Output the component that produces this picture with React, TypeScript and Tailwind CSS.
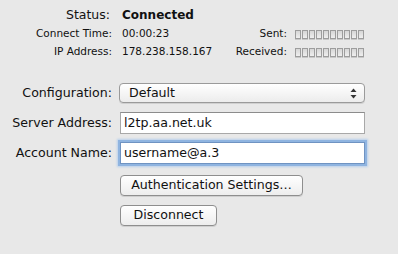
const font = { fontFamily: '"DejaVu Sans", "Lucida Grande", sans-serif' };

function Meter() {
  return (
    <div className="flex gap-[1px]">
      {Array.from({ length: 10 }).map((_, i) => (
        <div
          key={i}
          className="w-[6px] h-[9px] border border-[#9d9d9d] bg-gradient-to-b from-[#d6d6d6] to-[#efefef] shadow-[0_1px_0_#c8c8c8]"
        />
      ))}
    </div>
  );
}

function StatRow({
  label,
  value,
  side,
}: {
  label: string;
  value: string;
  side?: string;
}) {
  return (
    <div className="flex items-center h-[18px] text-[10.5px] text-[#111]">
      <span className="w-[112px] text-right">{label}</span>
      <span className="ml-[10px] w-[78px] whitespace-nowrap">{value}</span>
      {side && (
        <>
          <span className="w-[87px] text-right">{side}</span>
          <span className="ml-[8px]">
            <Meter />
          </span>
        </>
      )}
    </div>
  );
}

export default function App() {
  return (
    <div
      className="w-[398px] h-[254px] bg-[#e8e8e8] text-[#111] overflow-hidden"
      style={font}
    >
      <div className="flex items-center h-[18px] mt-[6px]">
        <span className="w-[110px] text-right text-[12.5px]">Status:</span>
        <span className="ml-[12px] text-[12px] font-bold">Connected</span>
      </div>
      <div className="mt-[1px]">
        <StatRow label="Connect Time:" value="00:00:23" side="Sent:" />
        <StatRow label="IP Address:" value="178.238.158.167" side="Received:" />
      </div>

      <div className="flex items-center h-[20px] mt-[22px] text-[12.6px]">
        <span className="w-[112px] text-right">Configuration:</span>
        <div className="ml-[7px] w-[246px] h-[20px] rounded-[4px] border border-[#9a9a9a] bg-gradient-to-b from-white to-[#ececec] shadow-[0_1px_0_#d0d0d0] flex items-center justify-between pl-[9px] pr-[7px]">
          <span>Default</span>
          <svg width="7" height="11" viewBox="0 0 7 11">
            <path d="M3.5 0.5 L6.5 4 L0.5 4 Z" fill="#333" />
            <path d="M3.5 10.5 L6.5 7 L0.5 7 Z" fill="#333" />
          </svg>
        </div>
      </div>

      <div className="flex items-center h-[22px] mt-[9px] text-[12.6px]">
        <span className="w-[112px] text-right">Server Address:</span>
        <div className="ml-[8px] w-[245px] h-[22px] bg-white border border-[#a8a8a8] border-t-[#8c8c8c] flex items-center pl-[3px]">
          l2tp.aa.net.uk
        </div>
      </div>

      <div className="flex items-center h-[22px] mt-[8px] text-[12.6px]">
        <span className="w-[112px] text-right">Account Name:</span>
        <div className="ml-[8px] w-[245px] h-[22px] bg-white border border-[#6f93c2] shadow-[0_0_0_2px_#8fb4e0,0_0_2px_3px_#b7cfec] flex items-center pl-[3px]">
          username@a.3
        </div>
      </div>

      <div className="ml-[120px] mt-[11px] flex flex-col items-start gap-[9px] text-[12.6px]">
        <button className="h-[21px] w-[183px] rounded-[4px] border border-[#8e8e8e] bg-gradient-to-b from-white to-[#ededed] shadow-[0_1px_0_#cfcfcf] flex items-center justify-center">
          Authentication Settings…
        </button>
        <button className="h-[21px] w-[97px] rounded-[4px] border border-[#8e8e8e] bg-gradient-to-b from-white to-[#ededed] shadow-[0_1px_0_#cfcfcf] flex items-center justify-center">
          Disconnect
        </button>
      </div>
    </div>
  );
}
